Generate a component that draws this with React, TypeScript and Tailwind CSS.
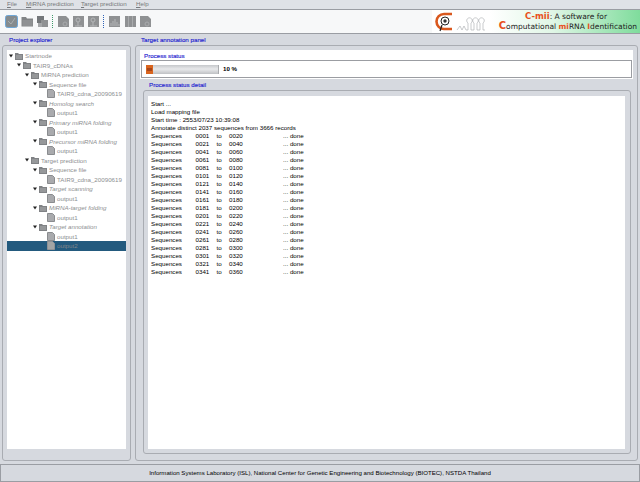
import React from "react";

const rows: { label: string; depth: number; kind: "folder" | "file"; italic?: boolean; selected?: boolean }[] = [
  { label: "Startnode", depth: 0, kind: "folder" },
  { label: "TAIR9_cDNAs", depth: 1, kind: "folder" },
  { label: "MiRNA prediction", depth: 2, kind: "folder" },
  { label: "Sequence file", depth: 3, kind: "folder" },
  { label: "TAIR9_cdna_20090619", depth: 4, kind: "file" },
  { label: "Homolog search", depth: 3, kind: "folder", italic: true },
  { label: "output1", depth: 4, kind: "file" },
  { label: "Primary miRNA folding", depth: 3, kind: "folder", italic: true },
  { label: "output1", depth: 4, kind: "file" },
  { label: "Precursor miRNA folding", depth: 3, kind: "folder", italic: true },
  { label: "output1", depth: 4, kind: "file" },
  { label: "Target prediction", depth: 2, kind: "folder" },
  { label: "Sequence file", depth: 3, kind: "folder" },
  { label: "TAIR9_cdna_20090619", depth: 4, kind: "file" },
  { label: "Target scanning", depth: 3, kind: "folder", italic: true },
  { label: "output1", depth: 4, kind: "file" },
  { label: "MiRNA-target folding", depth: 3, kind: "folder", italic: true },
  { label: "output1", depth: 4, kind: "file" },
  { label: "Target annotation", depth: 3, kind: "folder", italic: true },
  { label: "output1", depth: 4, kind: "file" },
  { label: "output2", depth: 4, kind: "file", selected: true },
];

const ranges = [
  ["0001", "0020"], ["0021", "0040"], ["0041", "0060"], ["0061", "0080"], ["0081", "0100"], ["0101", "0120"],
  ["0121", "0140"], ["0141", "0160"], ["0161", "0180"], ["0181", "0200"], ["0201", "0220"], ["0221", "0240"],
  ["0241", "0260"], ["0261", "0280"], ["0281", "0300"], ["0301", "0320"], ["0321", "0340"], ["0341", "0360"],
];

function FolderIcon() {
  return (
    <svg viewBox="0 0 8 8" className="h-[8px] w-[8px] shrink-0">
      <path d="M0 2 V1 H3 L4 2 H8 V8 H0 Z" fill="#808285" />
      <rect x="1" y="3" width="6" height="4" fill="#96989a" />
    </svg>
  );
}

function FileIcon({ selected }: { selected?: boolean }) {
  return (
    <svg viewBox="0 0 8 9" className="h-[9px] w-[8px] shrink-0">
      <path d="M0.5 0.5 H5.5 L7.5 2.5 V8.5 H0.5 Z" fill={selected ? "#a3a5a5" : "#a9aaad"} stroke={selected ? "#8f9295" : "#8a8c8f"} />
    </svg>
  );
}

function ToolIcon({ kind }: { kind: number }) {
  return (
    <svg viewBox="0 0 13 13" className="h-[13px] w-[13px] shrink-0">
      {kind === 0 && (
        <>
          <rect x="0.5" y="0.5" width="12" height="12" rx="2" fill="#858b8e" stroke="#6ea6d6" />
          <path d="M3 6 L6 9 L10 3" stroke="#a9aeb0" fill="none" />
        </>
      )}
      {kind === 1 && (
        <>
          <path d="M0.5 4 V2 H5 L6 3.5 H12 V11.5 H0.5 Z" fill="#828486" />
          <rect x="1.5" y="5" width="10" height="6" fill="#8f9193" />
        </>
      )}
      {kind === 2 && (
        <>
          <rect x="1" y="1" width="7" height="7" fill="#74777a" />
          <rect x="5" y="5" width="7" height="7" fill="#8f9193" />
          <rect x="2" y="8" width="4" height="4" fill="#a4a6a8" />
        </>
      )}
      {kind === 3 && (
        <>
          <path d="M1 1 H9 L12 4 V12 H1 Z" fill="#8f9193" />
          <circle cx="8" cy="9" r="2" fill="none" stroke="#a9abad" />
        </>
      )}
      {kind === 4 && (
        <>
          <rect x="1" y="1" width="11" height="11" fill="#8f9193" />
          <circle cx="6" cy="5" r="2" fill="none" stroke="#b4b6b8" />
          <path d="M6 7 V11 M3 11 H10" stroke="#b4b6b8" />
        </>
      )}
      {kind === 5 && (
        <>
          <rect x="1" y="1" width="11" height="11" fill="#8f9193" />
          <path d="M3 11 V8 M5 11 V6 M7 11 V4 M9 11 V7 M11 11 V9" stroke="#b4b6b8" />
        </>
      )}
      {kind === 6 && (
        <>
          <rect x="1" y="1" width="11" height="11" fill="#8f9193" />
          <path d="M4.5 1 V12 M8.5 1 V12" stroke="#a9abad" />
        </>
      )}
    </svg>
  );
}

function DotSep({ color }: { color: string }) {
  return <div className={`h-[13px] w-px border-l border-dotted ${color}`} />;
}

function Logo() {
  return (
    <div className="flex h-full w-[208px] shrink-0 items-center bg-[linear-gradient(90deg,#ffffff_28%,#e0f6e6_58%,#7fdc9c_100%)]">
      <svg viewBox="0 0 52 22" className="ml-[2px] h-[22px] w-[52px] shrink-0">
        <path d="M18 3 H10 A7.5 7.5 0 0 0 10 18 H18" fill="none" stroke="#d9581e" strokeWidth="2.6" />
        <circle cx="11" cy="10" r="4" fill="#fff" stroke="#222" />
        <circle cx="11" cy="10" r="1.7" fill="#333" />
        <path d="M8 14 L6 20" stroke="#222" strokeWidth="1.2" />
        <path d="M23 19 L26 15 L28 19 L30 15 L32 19 H34 V12 A2.8 2.8 0 1 1 37 12 V19 H40 V12 A2.8 2.8 0 1 1 43 12 V19 H46 V12 A2.8 2.8 0 1 1 49 12 V19 H51" fill="none" stroke="#a4a8ab" strokeWidth="0.6" />
      </svg>
      <div className="ml-auto mr-[3px] flex flex-col items-end font-['DejaVu_Sans',sans-serif] leading-[9px] text-[#222]">
        <p className="pr-[30px] text-[7.5px]">
          <span className="text-[8.5px] font-bold text-[#e8501c]">C-mii</span>: A software for
        </p>
        <p className="text-[7.5px]">
          <span className="text-[10px] font-bold text-[#e8501c]">C</span>omputational{" "}
          <span className="font-bold text-[#e8501c]">mi</span>RNA{" "}
          <span className="font-bold text-[#e8501c]">I</span>dentification
        </p>
      </div>
    </div>
  );
}

function Title({ children, className = "" }: { children: React.ReactNode; className?: string }) {
  return <p className={`h-[9px] text-[6.2px] leading-[9px] text-[#1f23d0] [-webkit-text-stroke:0.15px_#1f23d0] ${className}`}>{children}</p>;
}

function Explorer() {
  return (
    <section className="flex w-[129px] shrink-0 flex-col">
      <Title className="ml-[7px]">Project explorer</Title>
      <div className="mt-[1px] flex flex-1 flex-col rounded-[3px] border border-[#a9acb2] px-[4px] pb-[11px] pt-[4px]">
        <div className="flex-1 bg-white pt-[1px]">
          {rows.map((r, i) => (
            <div
              key={i}
              style={{ paddingLeft: 2 + r.depth * 8 }}
              className={`flex h-[9.5px] items-center text-[6.2px] ${r.selected ? "bg-[#235a7e] text-[#80868b]" : "text-[#8c8e90]"} ${r.italic ? "italic" : ""}`}
            >
              <div className="w-[6px] shrink-0">
                {r.kind === "folder" && (
                  <svg viewBox="0 0 5 4" className="h-[4px] w-[4px]">
                    <path d="M0 0 H5 L2.5 4 Z" fill="#222" />
                  </svg>
                )}
              </div>
              {r.kind === "folder" ? <FolderIcon /> : <FileIcon selected={r.selected} />}
              <span className="ml-[2px] whitespace-nowrap">{r.label}</span>
            </div>
          ))}
        </div>
      </div>
    </section>
  );
}

function Panel() {
  return (
    <section className="flex min-w-0 flex-1 flex-col">
      <Title className="ml-[6px]">Target annotation panel</Title>
      <div className="mt-[1px] flex flex-1 flex-col rounded-[3px] border border-[#a9acb2] pb-[6px] pl-[4px] pr-[4px] pt-[4px]">
        <div className="bg-white pb-[1px]">
          <Title className="ml-[4px] mt-[1px]">Process status</Title>
          <div className="ml-[1px] mr-[1px] flex h-[18px] items-center border border-[#9b9da2] bg-white pl-[4px]">
            <div className="flex h-[9px] w-[73px] items-stretch border-r border-[#a9abae] bg-[linear-gradient(180deg,#c6c8cb,#e8e9eb_45%,#bfc1c4)]">
              <div className="flex w-[7px] items-center bg-[#d9651f]">
                <div className="mx-[1px] h-[3px] w-full bg-[#a8461a]" />
              </div>
            </div>
            <span className="ml-[4px] text-[6.2px] font-bold text-black">10 %</span>
          </div>
        </div>
        <div className="ml-[3px] mr-[2px] mt-[1px] flex min-h-0 flex-1 flex-col">
          <Title className="ml-[6px]">Process status detail</Title>
          <div className="mt-[1px] flex flex-1 flex-col rounded-[3px] border border-[#a9acb2] pb-[4px] pl-[4px] pr-[5px] pt-[5px]">
            <div className="flex-1 bg-white pl-[3px] pt-[4px] text-[6.2px] leading-[8px] text-black">
              <p>Start ...</p>
              <p>Load mapping file</p>
              <p>Start time : 2553/07/23 10:39:08</p>
              <p>Annotate distinct 2037 sequences from 3666 records</p>
              {ranges.map(([a, b]) => (
                <div key={a} className="flex">
                  <span className="w-[44.5px]">Sequences</span>
                  <span className="w-[21px]">{a}</span>
                  <span className="w-[12.5px]">to</span>
                  <span className="w-[54px]">{b}</span>
                  <span>... done</span>
                </div>
              ))}
            </div>
          </div>
        </div>
      </div>
    </section>
  );
}

export default function App() {
  return (
    <div className="flex h-[482px] w-[640px] flex-col overflow-hidden bg-[#d6d9df] font-['Liberation_Sans',sans-serif]">
      {/* Menu bar */}
      <div className="flex h-[9px] overflow-hidden bg-[#dfe2e7] pl-[7px] text-[6.2px] leading-[8px] text-[#77797c]">
        <span className="w-[19px] first-letter:underline">File</span>
        <span className="w-[55px] first-letter:underline">MiRNA prediction</span>
        <span className="w-[55px] first-letter:underline">Target prediction</span>
        <span className="first-letter:underline">Help</span>
      </div>

      {/* Toolbar */}
      <div className="flex h-[25px] items-center justify-between border-y border-[#9a9da3] bg-[#f7f8f9]">
        <div className="flex items-center pl-[5px]">
          <ToolIcon kind={0} />
          <div className="w-[3px]" />
          <ToolIcon kind={1} />
          <div className="w-[2px]" />
          <ToolIcon kind={2} />
          <div className="w-[3px]" />
          <DotSep color="border-[#3f9a6a]" />
          <div className="w-[4px]" />
          <ToolIcon kind={3} />
          <div className="w-[2px]" />
          <ToolIcon kind={4} />
          <div className="w-[2px]" />
          <ToolIcon kind={4} />
          <div className="w-[3px]" />
          <DotSep color="border-[#2f63b8]" />
          <div className="w-[4px]" />
          <ToolIcon kind={5} />
          <div className="w-[3px]" />
          <ToolIcon kind={6} />
          <div className="w-[2px]" />
          <ToolIcon kind={3} />
        </div>
        <Logo />
      </div>

      {/* Panels */}
      <div className="flex min-h-0 flex-1 gap-[4px] pb-[3px] pl-[2px] pr-[2px] pt-[1px]">
        <Explorer />
        <Panel />
      </div>

      {/* Status bar */}
      <div className="flex h-[18px] items-center justify-center border-y border-x border-[#9a9da3] bg-[#d6d9df] text-[6.1px] text-black">
        Information Systems Laboratory (ISL), National Center for Genetic Engineering and Biotechnology (BIOTEC), NSTDA Thailand
      </div>
    </div>
  );
}
